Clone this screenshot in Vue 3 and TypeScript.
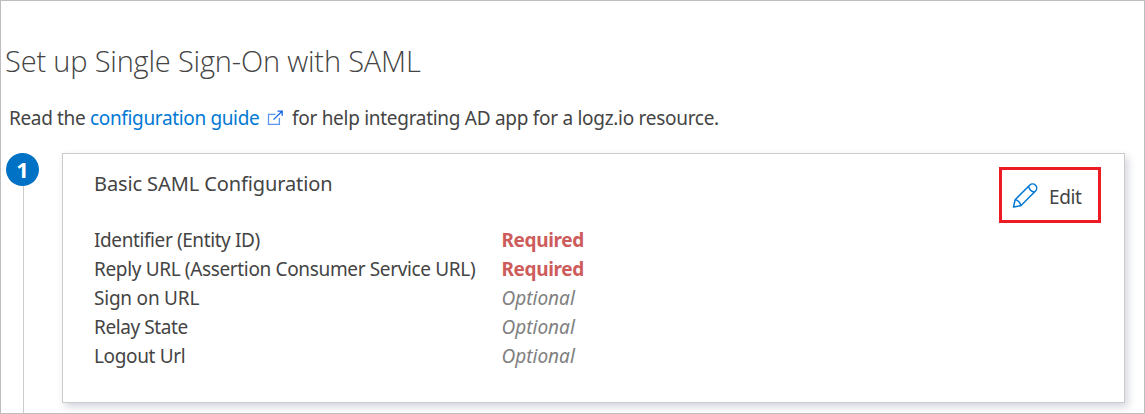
<script setup lang="ts">
interface Field {
  label: string
  required: boolean
  key: string
}

const fields: Field[] = [
  { key: 'identifier', label: 'Identifier (Entity ID)', required: true },
  { key: 'reply', label: 'Reply URL (Assertion Consumer Service URL)', required: true },
  { key: 'signon', label: 'Sign on URL', required: false },
  { key: 'relay', label: 'Relay State', required: false },
  { key: 'logout', label: 'Logout Url', required: false },
]
</script>

<template>
  <main class="page">
    <h1 class="title">Set up Single Sign-On with SAML</h1>
    <p class="intro">
      <span class="lead">Read the</span>
      <a class="guide">configuration guide</a>
      <svg class="external" width="17" height="16" viewBox="0 0 17 16" fill="none" stroke="#5c97ef" stroke-width="1.3">
        <path d="M8.5 4.3H1.5V14.4H12.4V8" />
        <path stroke="#1565e0" d="M6.5 9.6 15 1.3M10.5 1.2H15.2V5.7" />
      </svg>
      <span class="rest">for help integrating AD app for a logz.io resource.</span>
    </p>
    <div class="step">
      <div class="rail">
        <span class="number">1</span>
        <span class="line"></span>
      </div>
      <section class="card">
        <div class="details">
          <h2 class="heading">Basic SAML Configuration</h2>
          <dl class="fields">
            <div v-for="field in fields" :key="field.key" class="row">
              <dt><span :class="['label', field.key]">{{ field.label }}</span></dt>
              <dd><span :class="field.required ? 'required' : 'optional'">{{ field.required ? 'Required' : 'Optional' }}</span></dd>
            </div>
          </dl>
        </div>
        <button class="edit" type="button">
          <svg width="26" height="26" viewBox="0 0 26 26" fill="none" stroke="#0078d4" stroke-width="1.5" stroke-linejoin="round">
            <path d="M1.5 24 3.1 16.8 17.6 2.3C19.2.7 21.9.7 23.5 2.3 25.1 3.9 25.1 6.4 23.5 8L8.8 22.7Z" />
            <path d="M3.1 16.8C6 17 8.6 19.7 8.8 22.7M16.6 3.3C17.2 6.4 19.4 8.6 22.5 9" />
          </svg>
          <span>Edit</span>
        </button>
      </section>
    </div>
  </main>
</template>

<style>
body {
  margin: 0;
}
</style>

<style scoped>
.page {
  box-sizing: border-box;
  width: 1145px;
  height: 414px;
  overflow: hidden;
  border: 1px solid #bdbdbd;
  background: #fff;
  color: #444;
  font-family: "Noto Sans", "Open Sans", sans-serif;
  font-size: 19px;
}
.title {
  margin: 39px 0 0 4px;
  font-family: "Open Sans", "Noto Sans", sans-serif;
  font-size: 29px;
  font-weight: 300;
  line-height: 42px;
  letter-spacing: -0.18px;
  white-space: nowrap;
}
.intro {
  display: flex;
  align-items: center;
  height: 28px;
  margin: 22px 0 0 8px;
  white-space: nowrap;
  letter-spacing: -0.35px;
}
.lead {
  width: 81px;
}
.guide {
  width: 177px;
  color: #0078d4;
}
.external {
  width: 17px;
  margin-right: 8px;
}
.rest {
  letter-spacing: -0.29px;
}
.step {
  display: flex;
  height: 261px;
  margin: 21px 0 0 5px;
}
.rail {
  display: flex;
  flex-direction: column;
  align-items: center;
  width: 33px;
  margin-right: 23px;
}
.number {
  width: 33px;
  height: 33px;
  border-radius: 50%;
  background: #0072c6;
  color: #fff;
  font-size: 22px;
  font-weight: 700;
  line-height: 32px;
  text-align: center;
}
.line {
  flex: 1;
  width: 1px;
  margin-left: 2px;
  background: #ccc;
}
.card {
  display: flex;
  justify-content: space-between;
  box-sizing: border-box;
  width: 1063px;
  height: 250px;
  border: 1px solid #ccc;
  background: #fff;
  box-shadow: 3px 4px 8px rgba(60, 70, 100, 0.22);
}
.details {
  padding: 16px 0 0 31px;
}
.heading {
  margin: 0;
  font-size: 20px;
  font-weight: 400;
  line-height: 28px;
  letter-spacing: -0.11px;
}
.fields {
  margin: 28px 0 0;
}
.row {
  display: grid;
  grid-template-columns: 407.5px 100px;
  height: 29px;
  line-height: 29px;
  letter-spacing: -0.35px;
  white-space: nowrap;
}
dd {
  margin: 0;
}
.signon {
  letter-spacing: -0.22px;
}
.identifier,
.relay {
  letter-spacing: -0.4px;
}
.required {
  color: #cd5c5c;
  font-weight: 700;
}
.optional {
  color: #808080;
  font-style: italic;
  letter-spacing: 0;
}
.edit {
  display: flex;
  align-items: center;
  box-sizing: border-box;
  width: 102px;
  height: 56px;
  margin: 13px 23px 0 0;
  padding: 2px 0 0 10px;
  gap: 11px;
  border: 3px solid #ed1c24;
  background: #fff;
  color: #444;
  font: inherit;
  letter-spacing: -0.4px;
}
.edit span {
  padding-top: 1px;
}
</style>
